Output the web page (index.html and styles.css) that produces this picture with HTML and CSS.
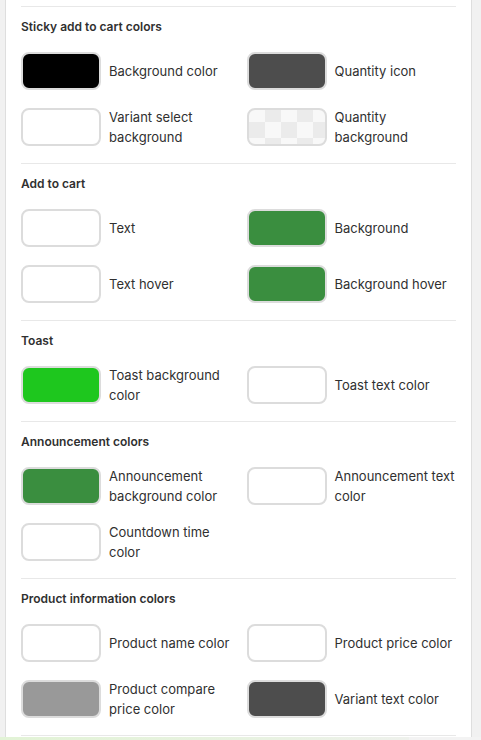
FILE: index.html
```html
<!DOCTYPE html>
<html lang="en">
<head>
<meta charset="utf-8">
<link rel="stylesheet" href="styles.css">
<title>Colors</title>
</head>
<body>
<div class="panel">
  <section class="group">
    <h3 class="group-title">Sticky add to cart colors</h3>
    <div class="grid">
      <div class="field"><span class="swatch sw-black"></span><span class="label">Background color</span></div>
      <div class="field"><span class="swatch sw-dark"></span><span class="label">Quantity icon</span></div>
      <div class="field"><span class="swatch"></span><span class="label">Variant select background</span></div>
      <div class="field"><span class="swatch sw-checker"></span><span class="label">Quantity background</span></div>
    </div>
  </section>
  <section class="group">
    <h3 class="group-title">Add to cart</h3>
    <div class="grid">
      <div class="field"><span class="swatch"></span><span class="label">Text</span></div>
      <div class="field"><span class="swatch sw-green"></span><span class="label">Background</span></div>
      <div class="field"><span class="swatch"></span><span class="label">Text hover</span></div>
      <div class="field"><span class="swatch sw-green"></span><span class="label">Background hover</span></div>
    </div>
  </section>
  <section class="group">
    <h3 class="group-title">Toast</h3>
    <div class="grid">
      <div class="field"><span class="swatch sw-lime"></span><span class="label">Toast background color</span></div>
      <div class="field"><span class="swatch"></span><span class="label">Toast text color</span></div>
    </div>
  </section>
  <section class="group">
    <h3 class="group-title">Announcement colors</h3>
    <div class="grid">
      <div class="field"><span class="swatch sw-green"></span><span class="label">Announcement background color</span></div>
      <div class="field"><span class="swatch"></span><span class="label">Announcement text color</span></div>
      <div class="field"><span class="swatch"></span><span class="label">Countdown time color</span></div>
    </div>
  </section>
  <section class="group">
    <h3 class="group-title">Product information colors</h3>
    <div class="grid">
      <div class="field"><span class="swatch"></span><span class="label">Product name color</span></div>
      <div class="field"><span class="swatch"></span><span class="label">Product price color</span></div>
      <div class="field"><span class="swatch sw-grey"></span><span class="label">Product compare price color</span></div>
      <div class="field"><span class="swatch sw-dark"></span><span class="label">Variant text color</span></div>
    </div>
  </section>
  <div class="group-end"></div>
</div>
<div class="bottom-strip"></div>
</body>
</html>
```

FILE: styles.css
```css
html, body {
  margin: 0;
  padding: 0;
}
body {
  background: #f1f1f1;
  font-family: Inter, "Noto Sans", "Liberation Sans", sans-serif;
  color: #303030;
  overflow: hidden;
}
.panel {
  margin-left: 5px;
  width: 435px;
  padding: 6px 15px 1px;
  background: #ffffff;
  border-left: 1px solid #dedede;
  border-right: 1px solid #dedede;
}
.group {
  border-top: 1px solid #e8e8e8;
  padding: 10px 0 17px;
}
.group-end {
  border-top: 1px solid #e8e8e8;
}
.group-title {
  margin: 0 0 15px;
  font-size: 12px;
  line-height: 20px;
  font-weight: 600;
  color: #303030;
}
.grid {
  display: grid;
  grid-template-columns: 1fr 1fr;
  grid-auto-rows: 38px;
  column-gap: 16px;
  row-gap: 18px;
}
.field {
  display: flex;
  align-items: center;
  gap: 8px;
  min-width: 0;
}
.swatch {
  flex: 0 0 auto;
  box-sizing: border-box;
  width: 80px;
  height: 38px;
  border: 2px solid #dcdcdc;
  border-radius: 8px;
  background: #ffffff;
}
.sw-black { background: #000000; }
.sw-dark { background: #4d4d4d; }
.sw-green { background: #3a8e3f; }
.sw-lime { background: #1ec71e; }
.sw-grey { background: #999999; }
.sw-checker {
  background-color: #f8f8f8;
  background-image: repeating-conic-gradient(#ebebeb 0 25%, #f8f8f8 0 50%);
  background-size: 32px 32px;
  background-position: 0 -4px;
}
.label {
  font-size: 13px;
  line-height: 20px;
  color: #303030;
}
.bottom-strip {
  height: 3px;
  background: linear-gradient(to right, #e2f3d6 0%, #e9f2e3 60%, #eef1ec 85%, #f3f3f3 85%);
}
```
